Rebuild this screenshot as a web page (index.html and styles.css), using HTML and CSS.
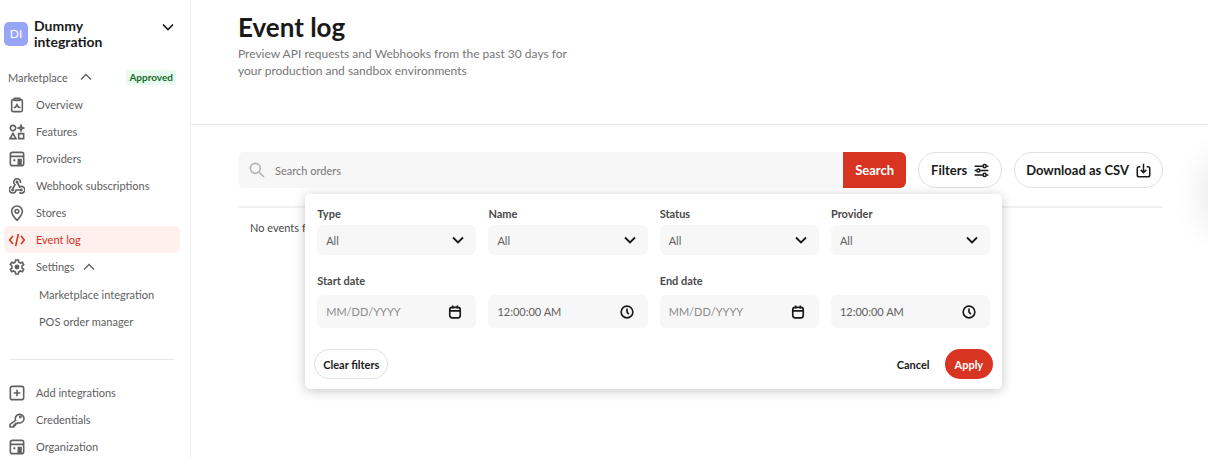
FILE: index.html
```html
<!DOCTYPE html>
<html lang="en">

<head>
    <meta charset="UTF-8">
    <meta name="viewport" content="width=device-width, initial-scale=1.0">
    <title>Event log</title>
    <link rel="stylesheet" href="styles.css">
</head>

<body>
    <div class="layout">
        <aside class="sidebar">
            <button class="account" type="button">
                <span class="avatar">DI</span>
                <span class="account-name">Dummy integration</span>
                <svg class="chevron account-chevron" viewBox="0 0 12 12"><path d="M1 3.500l5 5 5-5"/></svg>
            </button>
            <div class="section-head">
                <button class="section-toggle" type="button">Marketplace
                    <svg class="chevron" viewBox="0 0 12 12"><path d="M1 8.500l5-5 5 5"/></svg>
                </button>
                <span class="badge">Approved</span>
            </div>
            <nav class="nav">
                <a class="nav-item" href="#">
                    <svg class="icon" viewBox="0 0 24 24"><path d="M8 4H6a2 2 0 0 0-2 2v14a2 2 0 0 0 2 2h12a2 2 0 0 0 2-2V6a2 2 0 0 0-2-2h-2"/><path d="M8 2h8v3H8z"/><path d="M7 16l3-1 2-3.500 2 3.500 3 1"/></svg>
                    Overview
                </a>
                <a class="nav-item" href="#">
                    <svg class="icon" viewBox="0 0 24 24"><circle cx="6" cy="6" r="4"/><path d="M18 2l1.200 2.800L22 6l-2.800 1.200L18 10l-1.200-2.800L14 6l2.800-1.200z"/><path d="M6 14l4.500 8h-9z"/><path d="M14.500 14.500h7.500V22h-7.500z"/></svg>
                    Features
                </a>
                <a class="nav-item" href="#">
                    <svg class="icon" viewBox="0 0 24 24"><rect x="2" y="2" width="20" height="20" rx="3"/><path d="M2 8h20M8 12.500v3M6.500 14h3M14 22v-9h4v9M16 13v9"/></svg>
                    Providers
                </a>
                <a class="nav-item" href="#">
                    <svg class="icon" viewBox="0 0 24 24"><path d="M17 7.500A5 5 0 1 0 9 10l-3.500 6.500"/><path d="M12 6l4 7.500a5 5 0 1 1-.500 8"/><path d="M18 18h-7.500A5 5 0 1 1 4 12.800"/><circle cx="12" cy="6" r="1"/><circle cx="5.500" cy="18" r="1"/><circle cx="18.500" cy="18" r="1"/></svg>
                    Webhook subscriptions
                </a>
                <a class="nav-item" href="#">
                    <svg class="icon" viewBox="0 0 24 24"><path d="M12 23c5-5 8-9 8-13.500a8 8 0 0 0-16 0C4 14 7 18 12 23z"/><circle cx="12" cy="9.500" r="2.800"/></svg>
                    Stores
                </a>
                <a class="nav-item active" href="#" aria-current="page">
                    <svg class="icon" viewBox="0 0 24 24"><path d="M6 6l-5 6 5 6M18 6l5 6-5 6M14 3l-4 18"/></svg>
                    Event log
                </a>
                <a class="nav-item" href="#">
                    <svg class="icon" viewBox="0 0 24 24"><path d="M9.500 4.500L10 1.500h4l.500 3 2.500 1.500 3-1.200 2 3.600-2.400 2v3.200l2.400 2-2 3.600-3-1.200-2.500 1.500-.500 3h-4l-.500-3L7 18l-3 1.200-2-3.600 2.400-2v-3.200L2 8.400l2-3.600L7 6z"/><circle cx="12" cy="12" r="2.500" fill="currentColor"/></svg>
                    Settings
                    <svg class="chevron" viewBox="0 0 12 12"><path d="M1 8.500l5-5 5 5"/></svg>
                </a>
            </nav>
            <nav class="nav sub-nav">
                <a class="nav-item" href="#">Marketplace integration</a>
                <a class="nav-item" href="#">POS order manager</a>
            </nav>
            <hr class="divider">
            <nav class="nav bottom-nav">
                <a class="nav-item" href="#">
                    <svg class="icon" viewBox="0 0 24 24"><rect x="2" y="2" width="20" height="20" rx="3"/><path d="M12 7v10M7 12h10"/></svg>
                    Add integrations
                </a>
                <a class="nav-item" href="#">
                    <svg class="icon" viewBox="0 0 24 24"><path d="M10 12.500a6.500 6.500 0 1 1 3.500 3.500L12 17.500H9.500V20H7v2.500H1.500v-4z"/><circle cx="17" cy="7.500" r="1"/></svg>
                    Credentials
                </a>
                <a class="nav-item" href="#">
                    <svg class="icon" viewBox="0 0 24 24"><rect x="2" y="2" width="20" height="20" rx="3"/><path d="M2 8h20M8 12.500v3M6.500 14h3M14 22v-9h4v9M16 13v9"/></svg>
                    Organization
                </a>
            </nav>
        </aside>

        <main class="main">
            <header class="page-header">
                <h1>Event log</h1>
                <p>Preview API requests and Webhooks from the past 30 days for your production and sandbox environments</p>
            </header>
            <div class="content">
                <div class="toolbar">
                    <form class="search">
                        <svg class="search-icon" viewBox="0 0 24 24"><circle cx="9.500" cy="9.500" r="7.500"/><path d="M15 15l7.500 7.500"/></svg>
                        <input type="text" placeholder="Search orders" aria-label="Search orders">
                        <button type="submit">Search</button>
                    </form>
                    <div class="filters">
                        <button class="pill" type="button">Filters
                            <svg class="icon" viewBox="0 0 24 24"><path d="M1 5h13M20 5h3M1 12h3M10 12h13M1 19h13M20 19h3"/><circle cx="17" cy="5" r="2.500"/><circle cx="7" cy="12" r="2.500"/><circle cx="17" cy="19" r="2.500"/></svg>
                        </button>
                        <form class="filter-panel">
                            <div class="filter-grid">
                                <div class="field">
                                    <label for="type">Type</label>
                                    <div class="control">
                                        <select id="type"><option>All</option></select>
                                        <svg class="chevron" viewBox="0 0 12 12"><path d="M1 3.500l5 5 5-5"/></svg>
                                    </div>
                                </div>
                                <div class="field">
                                    <label for="name">Name</label>
                                    <div class="control">
                                        <select id="name"><option>All</option></select>
                                        <svg class="chevron" viewBox="0 0 12 12"><path d="M1 3.500l5 5 5-5"/></svg>
                                    </div>
                                </div>
                                <div class="field">
                                    <label for="status">Status</label>
                                    <div class="control">
                                        <select id="status"><option>All</option></select>
                                        <svg class="chevron" viewBox="0 0 12 12"><path d="M1 3.500l5 5 5-5"/></svg>
                                    </div>
                                </div>
                                <div class="field">
                                    <label for="provider">Provider</label>
                                    <div class="control">
                                        <select id="provider"><option>All</option></select>
                                        <svg class="chevron" viewBox="0 0 12 12"><path d="M1 3.500l5 5 5-5"/></svg>
                                    </div>
                                </div>
                            </div>
                            <div class="filter-grid dates">
                                <div class="field">
                                    <label for="start-date">Start date</label>
                                    <div class="control">
                                        <input id="start-date" type="text" placeholder="MM/DD/YYYY">
                                        <svg class="icon" viewBox="0 0 24 24"><rect x="3" y="4" width="18" height="18" rx="4"/><path d="M3 10h18M8 1v5M16 1v5"/></svg>
                                    </div>
                                </div>
                                <div class="field">
                                    <div class="control">
                                        <input type="text" value="12:00:00 AM" aria-label="Start time">
                                        <svg class="icon" viewBox="0 0 24 24"><circle cx="12" cy="12" r="10"/><path d="M12 6v6l3 4"/></svg>
                                    </div>
                                </div>
                                <div class="field">
                                    <label for="end-date">End date</label>
                                    <div class="control">
                                        <input id="end-date" type="text" placeholder="MM/DD/YYYY">
                                        <svg class="icon" viewBox="0 0 24 24"><rect x="3" y="4" width="18" height="18" rx="4"/><path d="M3 10h18M8 1v5M16 1v5"/></svg>
                                    </div>
                                </div>
                                <div class="field">
                                    <div class="control">
                                        <input type="text" value="12:00:00 AM" aria-label="End time">
                                        <svg class="icon" viewBox="0 0 24 24"><circle cx="12" cy="12" r="10"/><path d="M12 6v6l3 4"/></svg>
                                    </div>
                                </div>
                            </div>
                            <div class="filter-actions">
                                <button class="clear" type="reset">Clear filters</button>
                                <button class="cancel" type="button">Cancel</button>
                                <button class="apply" type="submit">Apply</button>
                            </div>
                        </form>
                    </div>
                    <button class="pill" type="button">Download as CSV
                        <svg class="icon" viewBox="0 0 24 24"><path d="M7 6H5a3 3 0 0 0-3 3v10a3 3 0 0 0 3 3h14a3 3 0 0 0 3-3V9a3 3 0 0 0-3-3h-2M12 1v14M7.500 11l4.500 4.500 4.500-4.500"/></svg>
                    </button>
                </div>
                <div class="results">No events found</div>
            </div>
        </main>
        <div class="drawer-handle"></div>
    </div>
</body>

</html>
```
FILE: styles.css
```css
* {
    box-sizing: border-box;
}

body {
    margin: 0;
    font-family: Lato, "Liberation Sans", sans-serif;
    font-size: 11px;
    color: #191919;
    background-color: #fff;
}

button,
input,
select {
    font-family: inherit;
    font-size: 11px;
    border: 0;
    padding: 0;
    background: none;
}

button {
    color: #191919;
    cursor: pointer;
    white-space: nowrap;
}

svg {
    fill: none;
    stroke: currentColor;
    stroke-width: 2.4;
    flex-shrink: 0;
}

.icon {
    width: 16px;
    height: 16px;
}

.chevron {
    width: 12px;
    height: 12px;
    stroke-width: 1.4;
}

.layout {
    display: flex;
    height: 100vh;
    overflow: hidden;
}

/* sidebar */

.sidebar {
    width: 191px;
    flex-shrink: 0;
    padding: 18px 10px 0 4px;
    border-right: 1px solid #f0f0f0;
}

.account {
    display: flex;
    width: 100%;
    align-items: center;
    text-align: left;
}

.avatar {
    width: 24px;
    height: 24px;
    border-radius: 5px;
    background-color: #97a5f7;
    color: #fff;
    font-size: 12px;
    line-height: 24px;
    text-align: center;
}

.account-name {
    flex: 1;
    margin: 0 30px 0 6px;
    font-size: 14px;
    line-height: 16px;
    font-weight: bold;
    white-space: normal;
}

.account-chevron {
    align-self: flex-start;
    margin: 3px 6px 0 0;
    stroke-width: 1.7;
}

.section-head {
    display: flex;
    justify-content: space-between;
    align-items: center;
    margin-top: 18px;
    padding-left: 4px;
    height: 18px;
}

.section-toggle {
    display: flex;
    align-items: center;
    gap: 12px;
    color: #606060;
}

.badge {
    padding: 0 3px;
    margin-right: 4px;
    border-radius: 3px;
    background-color: #e7fbef;
    color: #146b26;
    font-size: 10px;
    line-height: 15px;
    font-weight: bold;
}

.nav {
    margin-top: 5px;
}

.nav-item {
    display: flex;
    align-items: center;
    gap: 11px;
    height: 27px;
    padding-left: 5px;
    border-radius: 6px;
    color: #606060;
    text-decoration: none;
}

.nav-item .chevron {
    margin-left: -3px;
}

.nav-item.active {
    background-color: #fef0ed;
    color: #d83422;
}

.sub-nav {
    margin-top: 1px;
}

.sub-nav .nav-item {
    padding-left: 35px;
}

.divider {
    height: 1px;
    margin: 24px 6px 0;
    border: 0;
    background-color: #e7e7e7;
}

.bottom-nav {
    margin-top: 19px;
}

/* main area */

.main {
    flex: 1;
    min-width: 0;
}

.page-header {
    height: 125px;
    padding: 12px 47px 0;
    border-bottom: 1px solid #e7e7e7;
}

.page-header h1 {
    margin: 0;
    font-size: 26px;
    line-height: 30px;
}

.page-header p {
    max-width: 350px;
    margin: 3px 0 0;
    font-size: 12px;
    line-height: 17px;
    color: #767676;
}

.content {
    padding: 27px 45px 0 47px;
}

.toolbar {
    display: flex;
    gap: 12px;
}

.search {
    display: flex;
    flex: 1;
    align-items: center;
    height: 36px;
    border-radius: 6px;
    background-color: #f7f7f7;
    overflow: hidden;
}

.search-icon {
    width: 16px;
    height: 16px;
    margin: 0 10px 0 11px;
    color: #b2b2b2;
}

.search input {
    flex: 1;
    min-width: 0;
    height: 36px;
    outline: none;
}

.search input::placeholder {
    color: #767676;
}

.search button {
    width: 63px;
    height: 36px;
    background-color: #d83422;
    color: #fff;
    font-size: 13px;
    font-weight: bold;
}

.pill {
    display: flex;
    align-items: center;
    justify-content: center;
    gap: 7px;
    min-width: 84px;
    height: 36px;
    padding: 0 11px;
    border: 1px solid #e0e0e0;
    border-radius: 18px;
    font-size: 13px;
    font-weight: bold;
}

.pill .icon {
    width: 15px;
    height: 15px;
}

.results {
    margin-top: 18px;
    padding: 11px 12px;
    border-top: 2px solid #f1f1f1;
    line-height: 17px;
    color: #494949;
}

/* filter dropdown */

.filters {
    position: relative;
}

.filter-panel {
    position: absolute;
    top: 42px;
    right: 0;
    width: 697px;
    padding: 12px 12px 10px;
    border-radius: 5px;
    background-color: #fff;
    box-shadow: 0 2px 12px rgba(0, 0, 0, 0.22);
}

.filter-grid {
    display: grid;
    grid-template-columns: repeat(4, 1fr);
    gap: 12px;
    align-items: end;
}

.field label {
    display: block;
    margin-bottom: 3px;
    line-height: 16px;
    font-weight: bold;
    color: #494949;
}

.control {
    display: flex;
    align-items: center;
    position: relative;
    height: 30px;
    border-radius: 6px;
    background-color: #f7f7f7;
}

.control select,
.control input {
    width: 100%;
    height: 100%;
    padding: 0 36px 0 9px;
    appearance: none;
    outline: none;
    color: #606060;
}

.control input::placeholder {
    color: #8c8c8c;
}

.control .chevron,
.control .icon {
    position: absolute;
    right: 12px;
    color: #191919;
    pointer-events: none;
}

.control .chevron {
    stroke-width: 1.8;
}

.control .icon {
    right: 14px;
    width: 14px;
    height: 14px;
    stroke-width: 2.8;
}

.dates {
    margin-top: 18px;
}

.dates label {
    margin-bottom: 6px;
}

.dates .control {
    height: 33px;
}

.filter-actions {
    display: flex;
    margin: 21px -3px 0;
}

.filter-actions button {
    height: 30px;
    border-radius: 15px;
    font-weight: bold;
}

.filter-actions .clear {
    margin-right: auto;
    padding: 0 8px;
    border: 1px solid #e0e0e0;
}

.filter-actions .cancel {
    padding: 0 15px;
}

.filter-actions .apply {
    padding: 0 10px;
    background-color: #d83422;
    color: #fff;
}

/* collapsed drawer past the right edge, only its shadow shows */

.drawer-handle {
    position: fixed;
    top: 165px;
    left: 100%;
    width: 48px;
    height: 60px;
    box-shadow: 0 0 36px rgba(0, 0, 0, 0.12);
}
```
